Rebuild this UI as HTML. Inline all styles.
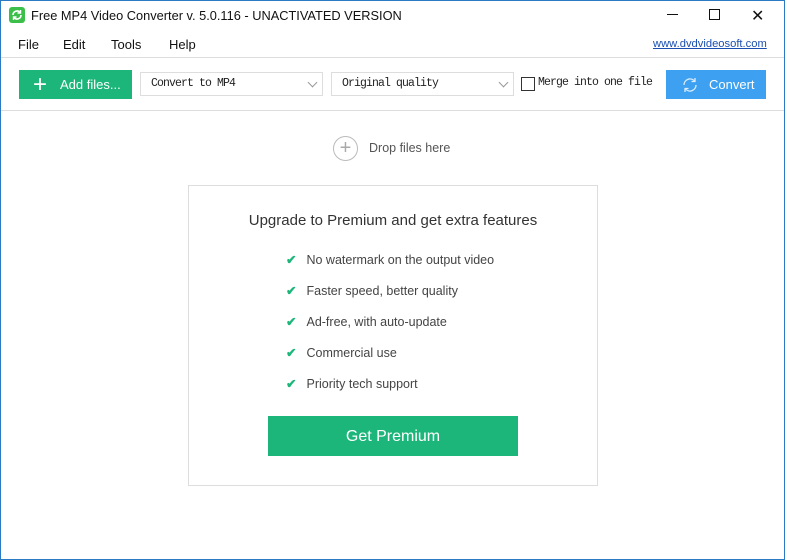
<!DOCTYPE html><html><head><style>
body{margin:0;width:785px;height:560px;overflow:hidden;background:#fff;font-family:"Liberation Sans",sans-serif;position:relative}
.win{position:absolute;left:0;top:0;width:783px;height:558px;border:1px solid #2b7bc4}
.a{position:absolute}
.mono{font-family:"Liberation Mono",monospace;font-size:11.5px;letter-spacing:-0.9px;color:#222}
.sel{position:absolute;top:72px;height:22px;border:1px solid #ddd;background:#fff}
.chev{position:absolute;right:6px;top:6px;width:6px;height:6px;border-right:1.5px solid #999;border-bottom:1.5px solid #999;transform:rotate(45deg)}
.feat{position:absolute;left:286px;font-size:12.5px;color:#444}
.feat span{color:#1db67a;font-weight:bold;margin-right:10px}
</style></head><body><div class="win"></div>
<div class="a" style="left:9px;top:7px;width:16px;height:16px;background:#3cbf4a;border-radius:3px"><svg width="16" height="16"><path d="M4 8a4 4 0 0 1 7-2.6M12 8a4 4 0 0 1-7 2.6" stroke="#fff" stroke-width="1.6" fill="none"/><path d="M11.5 3v3h-3M4.5 13v-3h3" stroke="#fff" stroke-width="1.4" fill="none"/></svg></div>
<div class="a" style="left:31px;top:8px;font-size:12.8px;color:#111">Free MP4 Video Converter v. 5.0.116 - UNACTIVATED VERSION</div>
<div class="a" style="left:667px;top:14px;width:11px;height:1px;background:#111"></div>
<div class="a" style="left:709px;top:9px;width:9px;height:9px;border:1px solid #111"></div>
<div class="a" style="left:751px;top:6px;font-size:16px;color:#111">✕</div>
<div class="a" style="left:18px;top:37px;font-size:13px;color:#111">File</div>
<div class="a" style="left:63px;top:37px;font-size:13px;color:#111">Edit</div>
<div class="a" style="left:111px;top:37px;font-size:13px;color:#111">Tools</div>
<div class="a" style="left:169px;top:37px;font-size:13px;color:#111">Help</div>
<div class="a" style="left:653px;top:38px;font-size:11.2px;color:#1a4fb0;text-decoration:underline">www.dvdvideosoft.com</div>
<div class="a" style="left:1px;top:57px;width:783px;height:1px;background:#ddd"></div>
<div class="a" style="left:19px;top:70px;width:113px;height:29px;background:#1db67a;color:#fff;font-size:13px"><span style="position:absolute;left:14px;top:1px;font-size:24px;font-weight:300">+</span><span style="position:absolute;left:41px;top:7px">Add files...</span></div>
<div class="sel" style="left:140px;width:181px"><span class="mono" style="position:absolute;left:10px;top:4px">Convert to MP4</span><div class="chev"></div></div>
<div class="sel" style="left:331px;width:181px"><span class="mono" style="position:absolute;left:10px;top:4px">Original quality</span><div class="chev"></div></div>
<div class="a" style="left:521px;top:77px;width:12px;height:12px;border:1px solid #333"></div>
<div class="a mono" style="left:538px;top:76px">Merge into one file</div>
<div class="a" style="left:666px;top:70px;width:100px;height:29px;background:#3ea0f0;color:#fff;font-size:13px"><svg class="a" style="left:15px;top:6px" width="18" height="18"><path d="M3 9a6 6 0 0 1 10.5-4M15 9a6 6 0 0 1-10.5 4" stroke="#dbeeff" stroke-width="1.3" fill="none"/><path d="M14 2v3.5h-3.5M4 16v-3.5h3.5" stroke="#dbeeff" stroke-width="1.3" fill="none"/></svg><span style="position:absolute;left:43px;top:7px">Convert</span></div>
<div class="a" style="left:1px;top:110px;width:783px;height:1px;background:#ddd"></div>
<div class="a" style="left:333px;top:136px;width:23px;height:23px;border:1px solid #bbb;border-radius:50%;color:#aaa;font-size:20px;text-align:center;line-height:22px">+</div>
<div class="a" style="left:369px;top:141px;font-size:12.5px;color:#555">Drop files here</div>
<div class="a" style="left:188px;top:185px;width:408px;height:299px;border:1px solid #ddd"></div>
<div class="a" style="left:188px;top:212px;width:410px;text-align:center;font-size:15px;color:#333">Upgrade to Premium and get extra features</div>
<div class="feat" style="top:252px"><span>✔</span>No watermark on the output video</div>
<div class="feat" style="top:283px"><span>✔</span>Faster speed, better quality</div>
<div class="feat" style="top:314px"><span>✔</span>Ad-free, with auto-update</div>
<div class="feat" style="top:345px"><span>✔</span>Commercial use</div>
<div class="feat" style="top:376px"><span>✔</span>Priority tech support</div>
<div class="a" style="left:268px;top:416px;width:250px;height:40px;background:#1db67a;color:#fff;font-size:16px;text-align:center;line-height:42px">Get Premium</div>
</body></html>
